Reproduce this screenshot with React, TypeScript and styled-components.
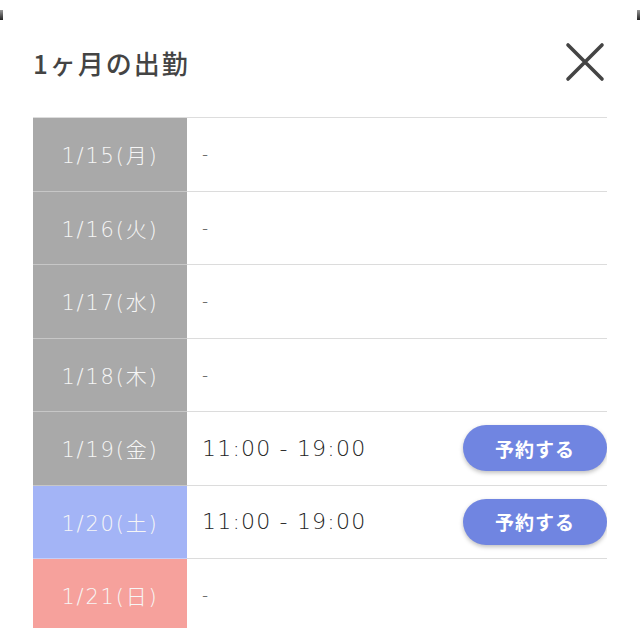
import styled, { createGlobalStyle } from "styled-components";

const GlobalStyle = createGlobalStyle`
  body {
    margin: 0;
    background: #fff;
    font-family: "DejaVu Sans", "Noto Sans CJK JP", sans-serif;
  }
`;

type Kind = "weekday" | "sat" | "sun";

const days: { date: string; kind: Kind; time?: string }[] = [
  { date: "1/15(月)", kind: "weekday" },
  { date: "1/16(火)", kind: "weekday" },
  { date: "1/17(水)", kind: "weekday" },
  { date: "1/18(木)", kind: "weekday" },
  { date: "1/19(金)", kind: "weekday", time: "11:00 - 19:00" },
  { date: "1/20(土)", kind: "sat", time: "11:00 - 19:00" },
  { date: "1/21(日)", kind: "sun" },
];

const dayColors: Record<Kind, string> = {
  weekday: "#a9a9a9",
  sat: "#a3b4f6",
  sun: "#f6a19c",
};

const Modal = styled.div`
  position: relative;
  height: 640px;
  padding: 0 33px;
  box-sizing: border-box;
  overflow: hidden;
`;

const CornerMark = styled.span<{ $side: "left" | "right" }>`
  position: absolute;
  top: 10px;
  ${(p) => p.$side}: 0;
  width: 3px;
  height: 10px;
  background: linear-gradient(to bottom, #999, #222);
`;

const Header = styled.div`
  display: flex;
  align-items: center;
  justify-content: space-between;
  height: 117px;
  padding-top: 7px;
  box-sizing: border-box;
`;

const Title = styled.h1`
  margin: 0;
  font-family: "Noto Sans CJK JP", sans-serif;
  font-size: 26px;
  font-weight: 500;
  color: #444;
  letter-spacing: 2px;
`;

const CloseButton = styled.button`
  display: flex;
  align-items: center;
  justify-content: center;
  width: 40px;
  height: 40px;
  margin-right: 2px;
  padding: 0;
  border: none;
  background: none;
  cursor: pointer;
`;

const Schedule = styled.div`
  height: 510px;
  border-top: 1px solid #ddd;
  overflow: hidden;
`;

const Row = styled.div`
  display: flex;
  height: 73.5px;
`;

const DateCell = styled.div<{ $kind: Kind }>`
  display: flex;
  align-items: center;
  justify-content: center;
  flex: 0 0 154px;
  background: ${(p) => dayColors[p.$kind]};
  border-bottom: 1px solid rgba(255, 255, 255, 0.35);
  color: #f6f6f6;
  font-size: 21px;
  font-weight: 200;
  letter-spacing: 1.8px;
`;

const InfoCell = styled.div`
  display: flex;
  align-items: center;
  justify-content: space-between;
  flex: 1;
  padding-left: 15px;
  border-bottom: 1px solid #dcdcdc;
  color: #222;
  font-size: 22px;
  font-weight: 200;
  letter-spacing: 1.2px;
`;

const Dash = styled.span`
  font-size: 17px;
  color: #444;
`;

const ReserveButton = styled.button`
  width: 144px;
  height: 46px;
  border: none;
  border-radius: 23px;
  background: #7085e1;
  box-shadow: 0 2px 4px rgba(0, 0, 0, 0.25);
  color: #fff;
  font-family: "Noto Sans CJK JP", sans-serif;
  font-size: 19px;
  font-weight: 700;
  letter-spacing: 1px;
  cursor: pointer;
`;

export default function App() {
  return (
    <>
      <GlobalStyle />
      <Modal>
        <CornerMark $side="left" />
        <CornerMark $side="right" />
        <Header>
          <Title>1ヶ月の出勤</Title>
          <CloseButton aria-label="close">
            <svg width="40" height="40" viewBox="0 0 40 40">
              <path
                d="M3 3 L37 37 M37 3 L3 37"
                stroke="#444"
                strokeWidth="3.6"
                strokeLinecap="round"
              />
            </svg>
          </CloseButton>
        </Header>
        <Schedule>
          {days.map((d) => (
            <Row key={d.date}>
              <DateCell $kind={d.kind}>{d.date}</DateCell>
              <InfoCell>
                {d.time ? (
                  <>
                    <span>{d.time}</span>
                    <ReserveButton>予約する</ReserveButton>
                  </>
                ) : (
                  <Dash>-</Dash>
                )}
              </InfoCell>
            </Row>
          ))}
        </Schedule>
      </Modal>
    </>
  );
}
